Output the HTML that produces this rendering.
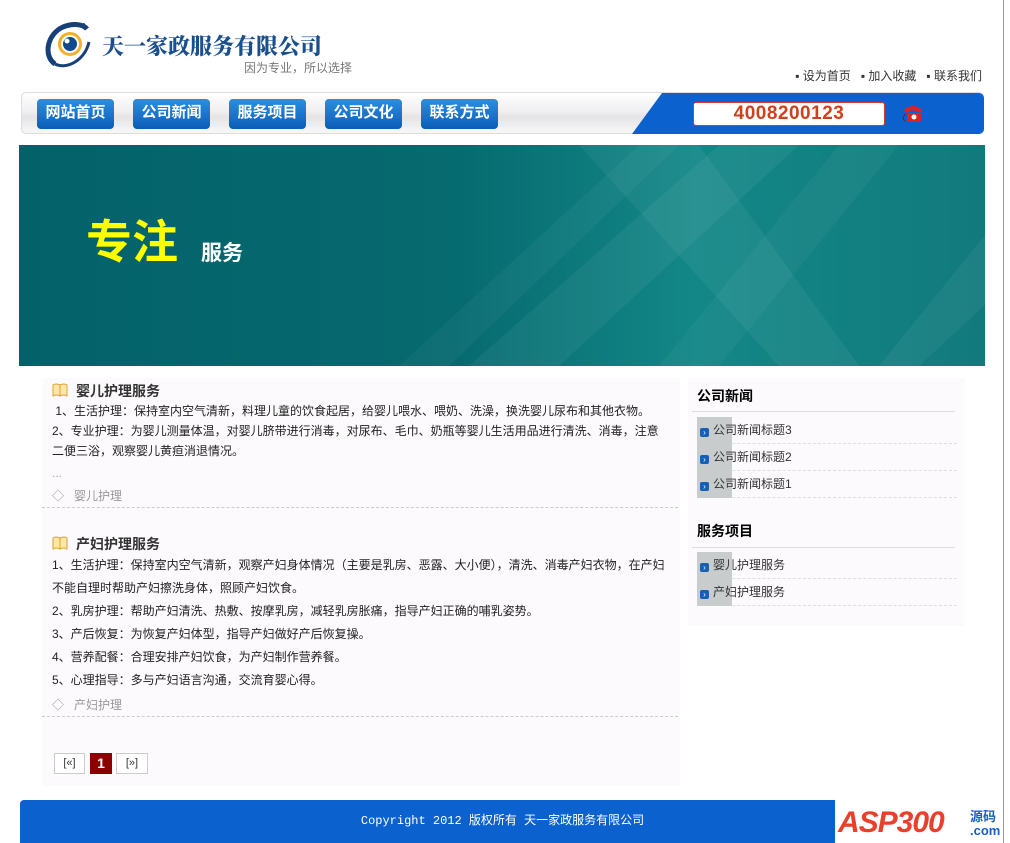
<!DOCTYPE html>
<html><head><meta charset="utf-8"><style>
*{margin:0;padding:0;box-sizing:border-box}
body{width:1010px;height:843px;background:#fff;font-family:"Liberation Sans","Noto Sans CJK SC",sans-serif;font-size:12px;color:#333;position:relative;overflow:hidden}
.abs{position:absolute}
.sb{left:1003px;top:0;width:1px;height:843px;background:#999}
.logo-t{left:102px;top:30px;font-family:"Noto Serif CJK SC",serif;font-weight:900;font-size:22px;color:#1b4f8c}
.slogan{left:244px;top:59px;color:#777;font-size:12px}
.tl{top:67px;right:28px;color:#333;font-size:12px}
.tl span{margin-left:10px}
.nav{left:21px;top:92px;width:963px;height:42px;border:1px solid #ddd;border-radius:5px;background:linear-gradient(#fff,#f0eff1 45%,#e4e3e6 60%,#f7f7f8)}
.btn{top:99px;height:30px;width:77px;border-radius:4px;background:linear-gradient(#2b8fe0,#0c5cb8);color:#fff;font-weight:bold;font-size:15px;text-align:center;line-height:28px}
.phone{left:693px;top:102px;width:192px;height:24px;background:#fff;border:1px solid #d33;border-radius:3px;color:#d0401a;font-size:19px;font-weight:bold;text-align:center;line-height:22px;letter-spacing:.5px}
.banner{left:19px;top:145px;width:966px;height:221px}
.lp{left:42px;top:378px;width:638px;height:408px;background:#fdfafd}
.rp{left:688px;top:378px;width:277px;height:248px;background:#fdfafd}
h3{position:absolute;font-size:14px;font-weight:bold;color:#333}
.p{position:absolute;left:52px;font-size:12px;color:#222;line-height:23px;width:615px}
.dash{position:absolute;border-top:1px dashed #ccc}
.tag{position:absolute;color:#999;font-size:12px}
.rh{position:absolute;left:697px;font-size:14px;font-weight:bold;color:#000}
.ri{position:absolute;left:697px;width:260px;height:27px;line-height:27px;border-bottom:1px dashed #ddd;font-size:12px;color:#333}
.ri:before{content:"";position:absolute;left:0;top:0;width:35px;height:27px;background:#c8cccd}
.ri i{position:relative;display:inline-block;width:9px;height:9px;background:#1560b5;border-radius:2px;margin:0 4px 0 3px;vertical-align:-1px;color:#fff;font-size:8px;line-height:9px;text-align:center;font-style:normal}
.ri span{position:relative}
.pg{position:absolute;top:753px;height:21px;border:1px solid #ccc;background:#fff;font-size:11px;text-align:center;line-height:19px;color:#333}
.foot{left:20px;top:800px;width:965px;height:43px;background:#0b62cf;border-radius:4px 4px 0 0;color:#fff;text-align:center;line-height:42px;font-family:"Liberation Mono","Noto Sans CJK SC",monospace;font-size:12px}
</style></head><body>
<div class="abs sb"></div>
<svg class="abs" style="left:45px;top:20px" width="58" height="50" viewBox="0 0 58 50">
<path d="M10 44C-2 36 2 14 18 7C28 3 38 4 42 9" fill="none" stroke="#173f7a" stroke-width="5"/>
<path d="M10 44C22 50 40 40 44 22" fill="none" stroke="#173f7a" stroke-width="3"/>
<circle cx="25" cy="24" r="12" fill="#f2b02b"/><circle cx="25" cy="24" r="9" fill="#fff"/><circle cx="25" cy="24" r="7" fill="#0f4a8e"/><circle cx="22" cy="21" r="2.5" fill="#fff"/>
<circle cx="30" cy="5" r="1.5" fill="#173f7a"/><circle cx="35" cy="4" r="1.2" fill="#173f7a"/><circle cx="39" cy="4" r="1" fill="#173f7a"/>
</svg>
<div class="abs logo-t">天一家政服务有限公司</div>
<div class="abs slogan">因为专业，所以选择</div>
<div class="abs tl"><span>▪ 设为首页</span><span>▪ 加入收藏</span><span>▪ 联系我们</span></div>
<div class="abs nav"></div>
<svg class="abs" style="left:632px;top:93px" width="352" height="41"><path d="M30 0H347a5 5 0 0 1 5 5V36a5 5 0 0 1-5 5H0Z" fill="#0b62cf"/></svg>
<div class="abs btn" style="left:37px">网站首页</div>
<div class="abs btn" style="left:133px">公司新闻</div>
<div class="abs btn" style="left:229px">服务项目</div>
<div class="abs btn" style="left:325px">公司文化</div>
<div class="abs btn" style="left:421px">联系方式</div>
<div class="abs phone">4008200123</div>
<svg class="abs" style="left:900px;top:102px" width="26" height="22"><path d="M4 8Q13 0 22 8L20 11Q13 6 6 11Z" fill="#d22"/><rect x="7" y="11" width="14" height="9" rx="2" fill="#d22"/><circle cx="14" cy="15" r="2.5" fill="#fff"/><path d="M6 12Q1 16 5 19" stroke="#333" fill="none"/></svg>
<svg class="abs banner" viewBox="0 0 966 221" preserveAspectRatio="none">
<defs><linearGradient id="g" x1="0" x2="1"><stop offset="0" stop-color="#04616a"/><stop offset=".45" stop-color="#066a6f"/><stop offset=".7" stop-color="#138787"/><stop offset="1" stop-color="#127a7c"/></linearGradient></defs>
<rect width="966" height="221" fill="url(#g)"/>
<polygon points="380,221 620,0 660,0 430,221" fill="#fff" opacity=".04"/>
<polygon points="450,221 700,0 780,0 540,221" fill="#fff" opacity=".05"/>
<polygon points="560,0 680,0 840,221 760,221" fill="#fff" opacity=".05"/>
<polygon points="640,221 820,0 880,0 700,221" fill="#fff" opacity=".04"/>
<polygon points="860,221 966,90 966,160 900,221" fill="#fff" opacity=".05"/>
</svg>
<div class="abs" style="left:86px;top:214px;color:#ff0;font-size:46px;font-weight:bold;line-height:56px">专注</div>
<div class="abs" style="left:201px;top:237px;color:#fff;font-size:21px;font-weight:bold">服务</div>
<div class="abs lp"></div>
<div class="abs rp"></div>
<svg class="abs" style="left:52px;top:383px" width="16" height="14"><path d="M1 2Q4 0 8 2Q12 0 15 2V13Q12 11 8 13Q4 11 1 13Z" fill="#fde7a8" stroke="#e0a030"/><line x1="8" y1="2" x2="8" y2="13" stroke="#e0a030"/></svg>
<h3 style="left:76px;top:381px">婴儿护理服务</h3>
<div class="p" style="top:401px;line-height:20px">&nbsp;1、生活护理：保持室内空气清新，料理儿童的饮食起居，给婴儿喂水、喂奶、洗澡，换洗婴儿尿布和其他衣物。<br>2、专业护理：为婴儿测量体温，对婴儿脐带进行消毒，对尿布、毛巾、奶瓶等婴儿生活用品进行清洗、消毒，注意二便三浴，观察婴儿黄疸消退情况。</div>
<div class="tag" style="left:52px;top:466px;color:#aaa">...</div>
<div class="tag" style="left:52px;top:487px">◇ &nbsp; 婴儿护理</div>
<div class="dash" style="left:42px;top:507px;width:636px"></div>
<svg class="abs" style="left:52px;top:536px" width="16" height="14"><path d="M1 2Q4 0 8 2Q12 0 15 2V13Q12 11 8 13Q4 11 1 13Z" fill="#fde7a8" stroke="#e0a030"/><line x1="8" y1="2" x2="8" y2="13" stroke="#e0a030"/></svg>
<h3 style="left:76px;top:534px">产妇护理服务</h3>
<div class="p" style="top:554px">1、生活护理：保持室内空气清新，观察产妇身体情况（主要是乳房、恶露、大小便），清洗、消毒产妇衣物，在产妇不能自理时帮助产妇擦洗身体，照顾产妇饮食。<br>2、乳房护理：帮助产妇清洗、热敷、按摩乳房，减轻乳房胀痛，指导产妇正确的哺乳姿势。<br>3、产后恢复：为恢复产妇体型，指导产妇做好产后恢复操。<br>4、营养配餐：合理安排产妇饮食，为产妇制作营养餐。<br>5、心理指导：多与产妇语言沟通，交流育婴心得。</div>
<div class="tag" style="left:52px;top:696px">◇ &nbsp; 产妇护理</div>
<div class="dash" style="left:42px;top:716px;width:636px"></div>
<div class="pg" style="left:54px;width:31px">[«]</div>
<div class="pg" style="left:90px;width:22px;background:#8b0000;color:#fff;border-color:#8b0000;font-size:14px;font-weight:bold">1</div>
<div class="pg" style="left:116px;width:32px">[»]</div>
<div class="rh" style="top:386px">公司新闻</div>
<div class="abs" style="left:692px;top:411px;width:263px;border-top:1px solid #ddd"></div>
<div class="ri" style="top:417px"><i>›</i><span>公司新闻标题3</span></div>
<div class="ri" style="top:444px"><i>›</i><span>公司新闻标题2</span></div>
<div class="ri" style="top:471px"><i>›</i><span>公司新闻标题1</span></div>
<div class="rh" style="top:521px">服务项目</div>
<div class="abs" style="left:692px;top:547px;width:263px;border-top:1px solid #ddd"></div>
<div class="ri" style="top:552px"><i>›</i><span>婴儿护理服务</span></div>
<div class="ri" style="top:579px"><i>›</i><span>产妇护理服务</span></div>
<div class="abs foot">Copyright 2012 版权所有 天一家政服务有限公司</div>
<div class="abs" style="left:835px;top:790px;width:168px;height:53px;background:#fff"></div>
<div class="abs" style="left:838px;top:806px;font-size:30px;font-weight:bold;font-style:italic;color:#e8402a;letter-spacing:-1px">ASP300</div>
<div class="abs" style="left:970px;top:810px;font-size:13px;font-weight:bold;color:#1a5fc0;line-height:14px">源码<br>.com</div>
</body></html>
